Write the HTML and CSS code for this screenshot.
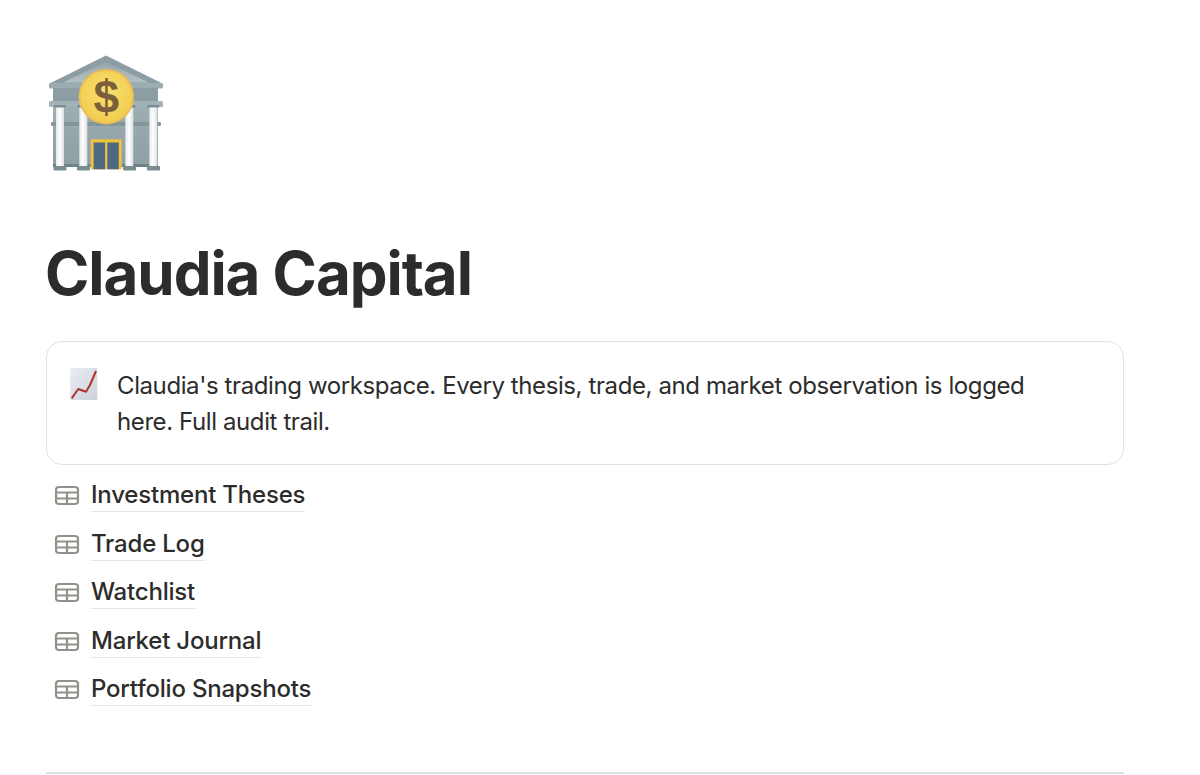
FILE: index.html
```html
<!DOCTYPE html>
<html lang="en">
<head>
<meta charset="utf-8">
<title>Claudia Capital</title>
<link rel="stylesheet" href="styles.css">
</head>
<body>
<main class="page">
  <svg class="page-icon" viewBox="46 52 120 122" width="120" height="122" aria-hidden="true">
    <defs>
      <linearGradient id="stone" x1="0" y1="0" x2="0" y2="1"><stop offset="0" stop-color="#9eaeb1"/><stop offset="1" stop-color="#8d9fa4"/></linearGradient>
      <linearGradient id="roof" x1="0" y1="0" x2="0" y2="1"><stop offset="0" stop-color="#94a5a9"/><stop offset="1" stop-color="#b4c1c4"/></linearGradient>
      <linearGradient id="column" x1="0" y1="0" x2="1" y2="0"><stop offset="0" stop-color="#e4e6e8"/><stop offset=".45" stop-color="#ffffff"/><stop offset="1" stop-color="#dcdfe2"/></linearGradient>
      <radialGradient id="coin" cx=".5" cy=".42" r=".6"><stop offset="0" stop-color="#f8e06e"/><stop offset="1" stop-color="#f1cc50"/></radialGradient>
    </defs>
    <path d="M106 55.500 49.500 83.500h113z" fill="#8c9ea3"/>
    <path d="M106 62 63 82.500h86z" fill="url(#roof)"/>
    <rect x="49" y="83" width="114" height="5.500" rx="1.500" fill="#9badb1"/>
    <rect x="53" y="88" width="105" height="14" fill="#8c9ea3"/>
    <rect x="49" y="101" width="114" height="6" rx="1.500" fill="#a3b2b6"/>
    <rect x="53" y="106" width="105" height="61" fill="url(#stone)"/>
    <rect x="51" y="122" width="110" height="4" rx="1.500" fill="#839599"/>
    <rect x="53" y="164" width="105" height="3" fill="#6f8288"/>
    <g fill="url(#column)">
      <rect x="56" y="107" width="8" height="60"/>
      <rect x="79.300" y="107" width="8" height="60"/>
      <rect x="125.300" y="107" width="8" height="60"/>
      <rect x="149.300" y="107" width="8" height="60"/>
    </g>
    <g fill="#7a8d92">
      <rect x="54" y="105" width="12" height="2.500"/>
      <rect x="77.300" y="105" width="12" height="2.500"/>
      <rect x="123.300" y="105" width="12" height="2.500"/>
      <rect x="147.300" y="105" width="12" height="2.500"/>
      <rect x="53.500" y="166" width="13" height="4.500" rx="1"/>
      <rect x="77" y="166" width="13" height="4.500" rx="1"/>
      <rect x="123" y="166" width="13" height="4.500" rx="1"/>
      <rect x="147" y="166" width="13" height="4.500" rx="1"/>
    </g>
    <rect x="90.700" y="139.300" width="31" height="30" fill="#f0c33c"/>
    <rect x="93.600" y="142.500" width="11.500" height="26.800" fill="#4d6a82"/>
    <rect x="107.300" y="142.500" width="11.500" height="26.800" fill="#4d6a82"/>
    <circle cx="106.300" cy="96.700" r="27.700" fill="#ebbd54"/>
    <circle cx="106.300" cy="96.700" r="25.800" fill="url(#coin)"/>
    <text class="coin-glyph" x="106.300" y="112.500" text-anchor="middle">$</text>
  </svg>

  <h1 class="title">Claudia Capital</h1>

  <aside class="callout">
    <svg class="callout-icon" viewBox="70 368 28 32" width="28" height="32" aria-hidden="true">
      <defs>
        <linearGradient id="paper" x1="0" y1="0" x2="1" y2="1"><stop offset="0" stop-color="#e9ecf2"/><stop offset="1" stop-color="#ccd2db"/></linearGradient>
      </defs>
      <rect x="70.300" y="368" width="27" height="32" fill="url(#paper)"/>
      <path d="M71.700 398.300 78.300 389l7.700 2.700 4-6.700 6-14" fill="none" stroke="#b1312f" stroke-width="2" stroke-linejoin="round"/>
    </svg>
    <p class="callout-text">Claudia's trading workspace. Every thesis, trade, and market observation is logged here. Full audit trail.</p>
  </aside>

  <ul class="links">
    <li class="link-row"><svg class="table-icon" viewBox="0 0 26 21" width="26" height="21" aria-hidden="true"><rect x="2" y="2" width="22" height="17" rx="3"/><path d="M2 7.500h22M2 13.500h22M13 7.500v11.500"/></svg><a class="link" href="#">Investment Theses</a></li>
    <li class="link-row"><svg class="table-icon" viewBox="0 0 26 21" width="26" height="21" aria-hidden="true"><rect x="2" y="2" width="22" height="17" rx="3"/><path d="M2 7.500h22M2 13.500h22M13 7.500v11.500"/></svg><a class="link" href="#">Trade Log</a></li>
    <li class="link-row"><svg class="table-icon" viewBox="0 0 26 21" width="26" height="21" aria-hidden="true"><rect x="2" y="2" width="22" height="17" rx="3"/><path d="M2 7.500h22M2 13.500h22M13 7.500v11.500"/></svg><a class="link" href="#">Watchlist</a></li>
    <li class="link-row"><svg class="table-icon" viewBox="0 0 26 21" width="26" height="21" aria-hidden="true"><rect x="2" y="2" width="22" height="17" rx="3"/><path d="M2 7.500h22M2 13.500h22M13 7.500v11.500"/></svg><a class="link" href="#">Market Journal</a></li>
    <li class="link-row"><svg class="table-icon" viewBox="0 0 26 21" width="26" height="21" aria-hidden="true"><rect x="2" y="2" width="22" height="17" rx="3"/><path d="M2 7.500h22M2 13.500h22M13 7.500v11.500"/></svg><a class="link" href="#">Portfolio Snapshots</a></li>
  </ul>

  <hr class="divider">
</main>
</body>
</html>
```

FILE: styles.css
```css
* { box-sizing: border-box; }

html, body {
  margin: 0;
  height: 100%;
  overflow: hidden;
  background: #ffffff;
}

body {
  font-family: Inter, "Liberation Sans", sans-serif;
  color: #2c2c2b;
}

.page {
  display: flex;
  flex-direction: column;
  width: 1200px;
  padding: 52px 76px 0 46px;
}

.page-icon {
  display: block;
  flex: none;
}

.coin-glyph {
  font-family: "Liberation Sans", sans-serif;
  font-size: 46px;
  font-weight: 700;
  fill: #7a5f38;
}

.title {
  margin: 63px 0 0 -1px;
  font-size: 60px;
  line-height: 72px;
  font-weight: 700;
  letter-spacing: -1.05px;
}

.callout {
  display: flex;
  gap: 19px;
  margin-top: 32px;
  padding: 25px 24px 24px 23px;
  height: 124px;
  border: 1.500px solid #e2e2e0;
  border-radius: 16px;
}

.callout-icon {
  flex: none;
  margin-top: 1px;
}

.callout-text {
  margin: 1px 0 0;
  max-width: 940px;
  font-size: 24px;
  line-height: 36px;
  letter-spacing: -0.4px;
}

.links {
  display: flex;
  flex-direction: column;
  gap: 12.600px;
  margin: 12px 0 0;
  padding: 0 0 0 8px;
  list-style: none;
}

.link-row {
  display: flex;
  align-items: center;
  gap: 11px;
  height: 36px;
}

.table-icon {
  flex: none;
  margin-top: 1px;
  fill: none;
  stroke: #94918b;
  stroke-width: 2.200;
}

.link {
  color: #2c2c2b;
  font-size: 24px;
  font-weight: 500;
  line-height: 33px;
  letter-spacing: -0.2px;
  text-decoration: none;
  border-bottom: 1.500px solid #e4e4e2;
}

.divider {
  width: 100%;
  height: 2px;
  margin: 65px 0 0;
  border: 0;
  background: #dedede;
}
```
